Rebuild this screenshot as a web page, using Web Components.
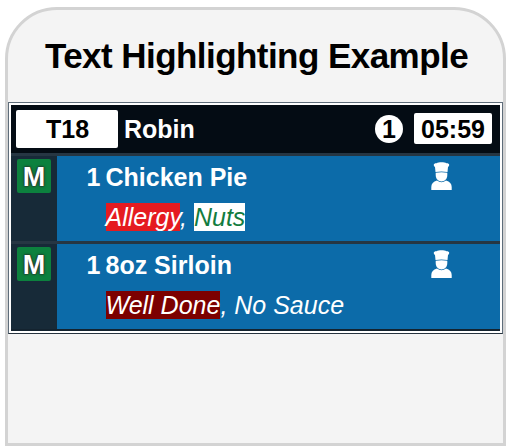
<!DOCTYPE html>
<html lang="en">
<head>
<meta charset="UTF-8">
<title>Text Highlighting Example</title>
<style>
    body {
        margin: 0;
        height: 446px;
        overflow: hidden;
        background: #fff;
        font-family: "Liberation Sans", Arial, sans-serif;
    }
</style>
</head>
<body>
<example-panel heading="Text Highlighting Example">
    <order-ticket table="T18" server="Robin" covers="1" time="05:59">
        <order-item course="M" qty="1" name="Chicken Pie">
            <text-mark tone="allergy">Allergy</text-mark>, <text-mark tone="nuts">Nuts</text-mark>
        </order-item>
        <order-item course="M" qty="1" name="8oz Sirloin">
            <text-mark tone="cooked">Well Done</text-mark>, No Sauce
        </order-item>
    </order-ticket>
</example-panel>

<script>
class ExamplePanel extends HTMLElement {
    constructor() {
        super();
        this.attachShadow({ mode: 'open' });
    }

    connectedCallback() {
        this.shadowRoot.innerHTML = `
            <style>
                :host {
                    display: block;
                    box-sizing: border-box;
                    width: 501px;
                    height: 439px;
                    margin: 7px 0 0 5px;
                    border: 3px solid #d3d3d3;
                    border-radius: 52px 52px 0 0;
                    background: #f4f4f4;
                }

                h1 {
                    height: 92px;
                    margin: 0;
                    padding-left: 2px;
                    color: #000;
                    font-size: 35px;
                    letter-spacing: -0.55px;
                    line-height: 92px;
                    text-align: center;
                    white-space: nowrap;
                }
            </style>
            <h1>${this.getAttribute('heading')}</h1>
            <slot></slot>
        `;
    }
}

class OrderTicket extends HTMLElement {
    constructor() {
        super();
        this.attachShadow({ mode: 'open' });
    }

    connectedCallback() {
        this.shadowRoot.innerHTML = `
            <style>
                :host {
                    display: block;
                    box-sizing: border-box;
                    height: 232px;
                    padding: 2px;
                    border: 1px solid #5f6d7a;
                    border-bottom-color: #27333e;
                    background: #fff;
                    font-size: 25px;
                    font-weight: 700;
                }

                .body {
                    box-sizing: border-box;
                    height: 226px;
                    border-bottom: 2px solid #14232f;
                    background: #172a38;
                }

                header {
                    display: flex;
                    align-items: center;
                    box-sizing: border-box;
                    height: 48px;
                    padding: 0 8px 1px 5px;
                    background: #040c14;
                    color: #fff;
                    line-height: 1;
                }

                .table,
                .time {
                    display: grid;
                    place-items: center;
                    box-sizing: border-box;
                    padding-top: 1px;
                    border-radius: 2px;
                    background: #fff;
                    color: #000;
                }

                .table {
                    width: 102px;
                    height: 38px;
                    padding-left: 1px;
                }

                .server {
                    flex: 1;
                    margin-left: 6px;
                    padding-top: 2px;
                }

                .covers {
                    display: grid;
                    place-items: center;
                    box-sizing: border-box;
                    width: 28px;
                    height: 28px;
                    margin-right: 11px;
                    padding-top: 2px;
                    border-radius: 50%;
                    background: #fff;
                    color: #000;
                }

                .time {
                    width: 78px;
                    height: 31px;
                }
            </style>
            <div class="body">
                <header>
                    <span class="table">${this.getAttribute('table')}</span>
                    <span class="server">${this.getAttribute('server')}</span>
                    <span class="covers">${this.getAttribute('covers')}</span>
                    <span class="time">${this.getAttribute('time')}</span>
                </header>
                <slot></slot>
            </div>
        `;
    }
}

class OrderItem extends HTMLElement {
    constructor() {
        super();
        this.attachShadow({ mode: 'open' });
    }

    connectedCallback() {
        this.shadowRoot.innerHTML = `
            <style>
                :host {
                    display: flex;
                    box-sizing: border-box;
                    height: 88px;
                    border-top: 3px solid #263643;
                    color: #fff;
                }

                .course {
                    box-sizing: border-box;
                    width: 46px;
                    padding: 3px 0 0 6px;
                    background: #172a38;
                }

                .badge {
                    box-sizing: border-box;
                    width: 34px;
                    height: 34px;
                    padding-top: 1px;
                    border-radius: 2px;
                    background: #0c813e;
                    font-size: 27px;
                    line-height: 34px;
                    text-align: center;
                    text-shadow: 0 0 2px #222, 0 0 3px #333, 0 0 1px #222;
                }

                .detail {
                    display: grid;
                    grid-template-columns: 48.5px 1fr auto;
                    grid-template-rows: 41px 41px;
                    flex: 1;
                    line-height: 41px;
                    background: #0c6ba9;
                }

                .qty,
                .name {
                    line-height: 43px;
                }

                .qty {
                    padding-right: 5px;
                    text-align: right;
                }

                .note {
                    grid-column: 2 / 4;
                    font-style: italic;
                    font-weight: 400;
                }

                svg {
                    display: block;
                    margin: 6px 48px 0 0;
                }
            </style>
            <div class="course"><div class="badge">${this.getAttribute('course')}</div></div>
            <div class="detail">
                <span class="qty">${this.getAttribute('qty')}</span>
                <span class="name">${this.getAttribute('name')}</span>
                <svg width="21" height="28" viewBox="0 0 21 28" fill="#fff">
                    <path d="M4.500 10 4 5C2 3.500 2.500 1 5.500 1.200 7.500 0 13.500 0 15.500 1.200 18.500 1 19 3.500 17 5L16.500 10Q10.500 8.800 4.500 10Z"/>
                    <path d="M4.700 10.800Q10.500 9.700 16.300 10.800V13C16.300 21.500 4.700 21.500 4.700 13Z"/>
                    <path d="M.3 28V25Q.3 20 6 18.500 10.500 22 15 18.500 20.700 20 20.700 25V28Z"/>
                </svg>
                <span class="note"><slot></slot></span>
            </div>
        `;
    }
}

class TextMark extends HTMLElement {
    constructor() {
        super();
        this.attachShadow({ mode: 'open' });
    }

    connectedCallback() {
        this.shadowRoot.innerHTML = `
            <style>
                :host {
                    display: inline;
                    color: #fff;
                }

                :host([tone="allergy"]) {
                    background: #e51b20;
                }

                :host([tone="nuts"]) {
                    background: #fff;
                    color: #127c40;
                }

                :host([tone="cooked"]) {
                    background: #7c0000;
                }
            </style><slot></slot>`;
    }
}

customElements.define('example-panel', ExamplePanel);
customElements.define('order-ticket', OrderTicket);
customElements.define('order-item', OrderItem);
customElements.define('text-mark', TextMark);
</script>
</body>
</html>
